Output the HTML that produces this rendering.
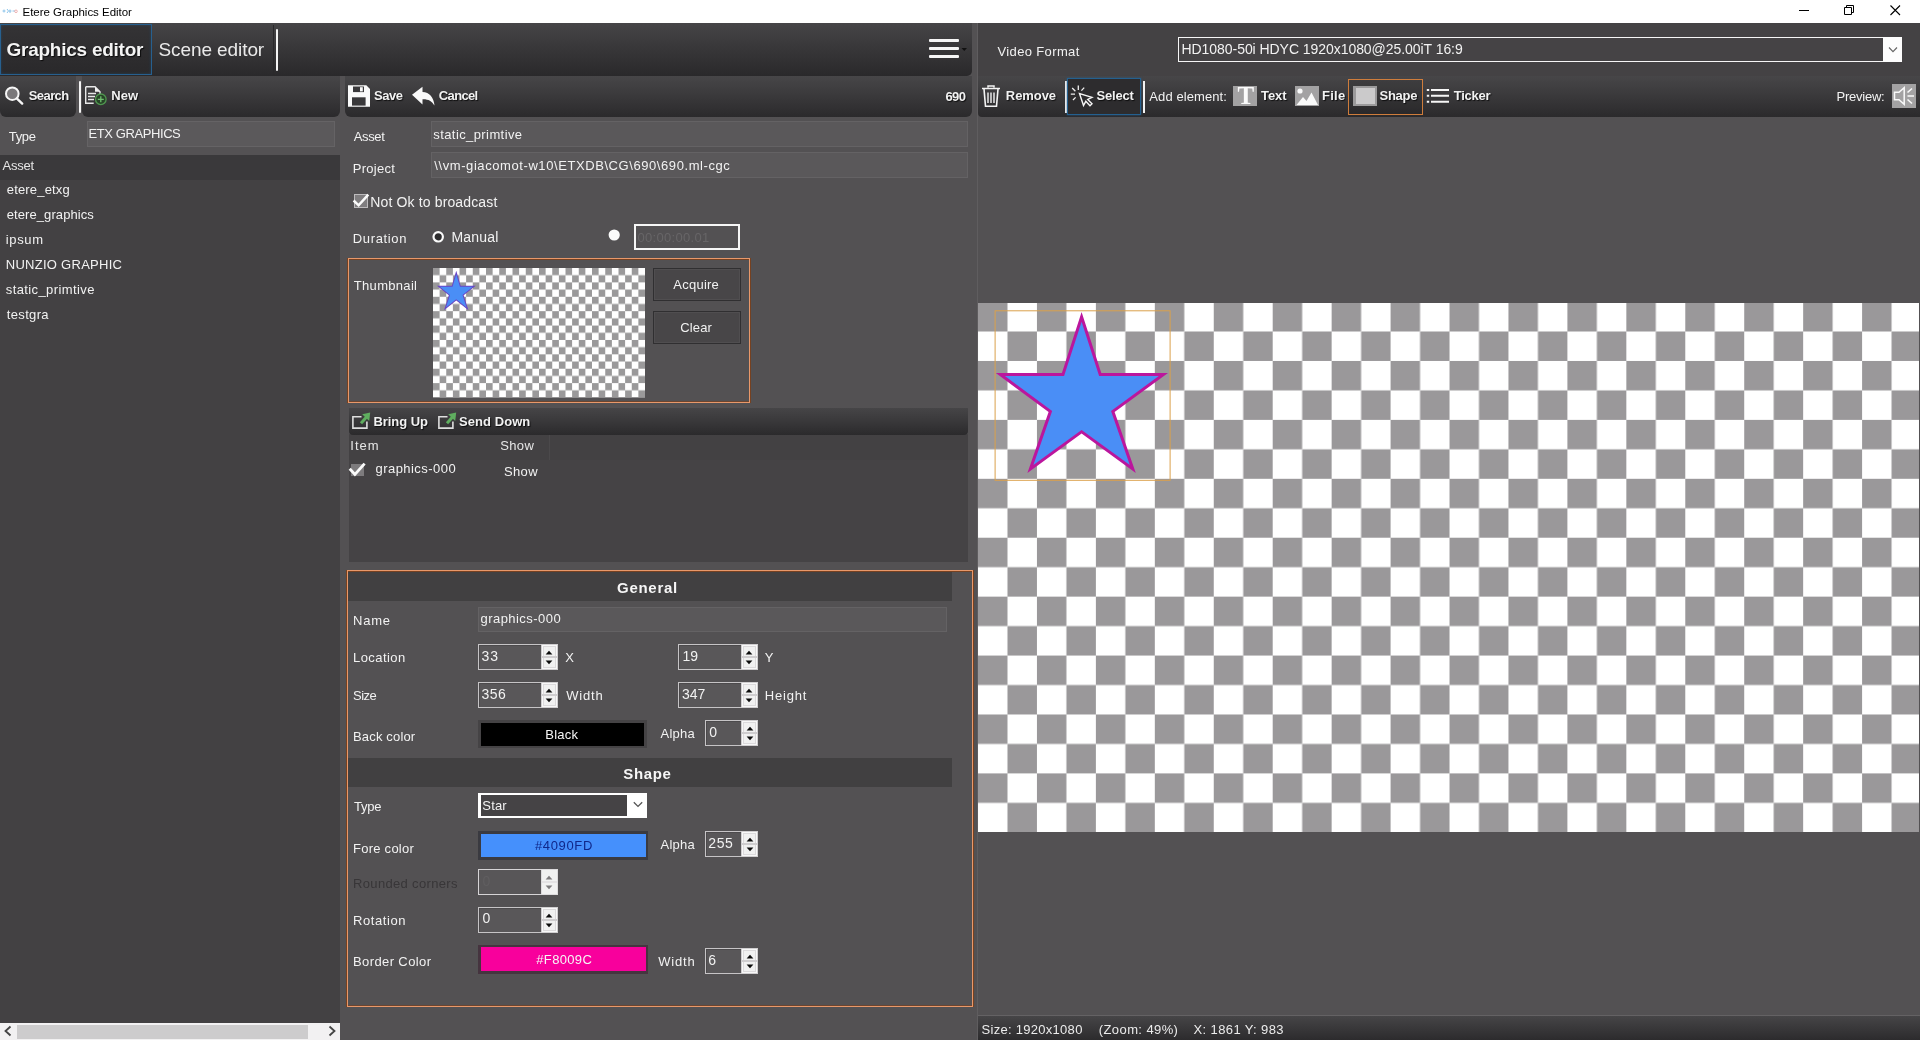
<!DOCTYPE html>
<html lang="en"><head><meta charset="utf-8"><title>Etere Graphics Editor</title>
<style>
html,body{margin:0;padding:0;}
body{width:1920px;height:1040px;overflow:hidden;position:relative;background:#535153;font-family:"Liberation Sans", sans-serif;}
#app{position:absolute;left:0;top:0;width:1920px;height:1040px;overflow:hidden;will-change:transform;}
#app div,#app svg,#app span.t{position:absolute;box-sizing:border-box;}
span.t{white-space:pre;line-height:normal;font-family:"Liberation Sans", sans-serif;}
</style></head><body><div id="app">
<div style="left:0px;top:0px;width:1920px;height:23px;background:#fff;"></div>
<svg style="left:2px;top:7px" width="16" height="8" viewBox="0 0 16 8"><path d="M0.5 4h3M2 2.5v3M5 2l1.5 2L5 6M8 2.5v3.5M7 4h2.5M10.5 4h2.5" stroke="#8cc4ea" stroke-width="1" fill="none"/><circle cx="14" cy="4.3" r="1.3" fill="none" stroke="#eaa0a0" stroke-width="0.8"/></svg>
<svg style="left:1790px;top:0px" width="130" height="23" viewBox="0 0 130 23"><path d="M9 10.5h10" stroke="#000" stroke-width="1"/><path d="M54.5 7.5h7v7h-7z M56.5 7.5v-2h7v7h-2" stroke="#000" stroke-width="1" fill="none"/><path d="M100.5 5.5l9.5 9.5M110 5.5l-9.5 9.5" stroke="#000" stroke-width="1.1" fill="none"/></svg>
<div style="left:0px;top:117px;width:340px;height:923px;background:#434143;"></div>
<div style="left:0px;top:23px;width:972px;height:53px;background:linear-gradient(#464547 0%,#3a393b 40%,#2a292b 100%);border-radius:0 0 5px 0;"></div>
<div style="left:0px;top:24px;width:152px;height:51px;background:linear-gradient(#343335,#2a292b);border:1px solid #27608f;box-shadow:inset 0 0 3px rgba(40,110,170,.35);"></div>
<div style="left:273px;top:25px;width:1px;height:50px;background:#2a292b;"></div>
<div style="left:276px;top:29px;width:2px;height:42px;background:#f4f4f4;border-radius:1px;"></div>
<div style="left:929px;top:39px;width:30px;height:3px;background:#f6f6f6;border-radius:1px;"></div>
<div style="left:929px;top:47px;width:30px;height:3px;background:#f6f6f6;border-radius:1px;"></div>
<div style="left:929px;top:55px;width:30px;height:3px;background:#f6f6f6;border-radius:1px;"></div>
<svg style="left:961px;top:47px" width="7" height="5" viewBox="0 0 7 5"><path d="M0.5 1h5.5l-2.75 3z" fill="#111"/></svg>
<div style="left:0px;top:76px;width:76px;height:41px;background:linear-gradient(#474648 0%,#3b3a3c 45%,#2b2a2c 100%);border-radius:0 0 6px 6px;"></div>
<div style="left:79px;top:81px;width:2px;height:32px;background:#f4f4f4;border-radius:1px;"></div>
<div style="left:82px;top:76px;width:258px;height:41px;background:linear-gradient(#474648 0%,#3b3a3c 45%,#2b2a2c 100%);border-radius:0 0 6px 6px;"></div>
<div style="left:345px;top:76px;width:627px;height:41px;background:linear-gradient(#474648 0%,#3b3a3c 45%,#2b2a2c 100%);border-radius:0 0 6px 6px;"></div>
<svg style="left:3px;top:84px" width="22" height="23" viewBox="0 0 22 23"><circle cx="9.3" cy="9.7" r="6.3" fill="#7a787a" stroke="#f6f6f6" stroke-width="2"/><path d="M14 14.6l5.2 5" stroke="#f6f6f6" stroke-width="2.4" stroke-linecap="round"/></svg>
<svg style="left:84px;top:85px" width="24" height="22" viewBox="0 0 24 22"><path d="M1.7 1.7h9.3l5 5v3M1.7 1.7v16.6h8" fill="none" stroke="#e8e8e8" stroke-width="1.4"/><path d="M11 1.7l5 5h-5z" fill="#f2f2f2"/><path d="M4 8.5h8M4 11.5h7M4 14.5h6" stroke="#e8e8e8" stroke-width="1.3"/><circle cx="16.8" cy="14.3" r="5.3" fill="#274427" stroke="#4f974f" stroke-width="1.3"/><path d="M13.8 14.3h6M16.8 11.3v6" stroke="#6fbf6f" stroke-width="1.3"/></svg>
<svg style="left:348px;top:85px" width="22" height="22" viewBox="0 0 22 22"><path d="M0 0.3h18.3l3.7 3.7v17.7h-22z" fill="#fafafa"/><rect x="5" y="1.5" width="11" height="5.6" fill="#3a393b"/><rect x="12" y="2.2" width="2.8" height="4.2" fill="#fafafa"/><rect x="4" y="12.3" width="13.6" height="8.3" fill="#39383a"/></svg>
<svg style="left:411px;top:86px" width="25" height="21" viewBox="0 0 25 21"><path d="M1 8.8L11.5 0.8v5.2c7 0.4 11.2 5.2 12 13.6c-2.6-4.6-6.2-6.6-12-6.4v5.2z" fill="#fafafa"/></svg>
<div style="left:0px;top:117px;width:340px;height:38px;background:#545254;"></div>
<div style="left:87px;top:121px;width:248px;height:26px;background:#5b595b;border:1px solid #656365;"></div>
<div style="left:0px;top:155px;width:340px;height:25px;background:#3a393b;"></div>
<div style="left:0px;top:1023px;width:340px;height:17px;background:#f2f1f2;"></div>
<div style="left:17px;top:1024.5px;width:291px;height:14px;background:#cdcccd;"></div>
<svg style="left:3px;top:1025px" width="10" height="12" viewBox="0 0 10 12"><path d="M7.5 1.5L2.5 6l5 4.5" stroke="#444" stroke-width="1.8" fill="none"/></svg>
<svg style="left:327px;top:1025px" width="10" height="12" viewBox="0 0 10 12"><path d="M2.5 1.5L7.5 6l-5 4.5" stroke="#444" stroke-width="1.8" fill="none"/></svg>
<div style="left:431px;top:121px;width:537px;height:26px;background:#5a585a;border:1px solid #646264;"></div>
<div style="left:431px;top:152px;width:537px;height:26px;background:#5a585a;border:1px solid #646264;"></div>
<div style="left:354px;top:194.3px;width:14px;height:13.5px;background:#7f7d7f;border:1px solid #bdbbbd;"></div>
<svg style="left:350px;top:190px" width="22" height="20" viewBox="0 0 22 20"><path d="M3.6 10.5l5 4.8L18.3 4.6" fill="none" stroke="#fbfbfb" stroke-width="2.5"/></svg>
<svg style="left:431px;top:230px" width="14" height="14" viewBox="0 0 14 14"><circle cx="7.2" cy="6.8" r="4.7" fill="#2c2b2d" stroke="#fafafa" stroke-width="2.2"/></svg>
<svg style="left:607px;top:228px" width="14" height="14" viewBox="0 0 14 14"><circle cx="7.2" cy="7" r="5.6" fill="#fbfbfb"/></svg>
<div style="left:634px;top:224px;width:105.5px;height:25.5px;background:#535153;border:2px solid #f6f6f6;"></div>
<div style="left:348px;top:258px;width:402px;height:145px;border:1px solid #e8986a;box-shadow:inset 0 1px 0 rgba(125,62,25,.85),-1px 0 0 rgba(125,62,25,.85),1px 0 0 rgba(125,62,25,.85),inset 0 -1px 0 rgba(125,62,25,.6);"></div>
<svg style="left:432.5px;top:268px" width="212" height="129.5" viewBox="0 0 212 129.5"><defs><pattern id="ck1" width="13.25" height="14.39" patternUnits="userSpaceOnUse" patternTransform="translate(0 0)"><rect width="13.25" height="14.39" fill="#fff"/><rect width="6.625" height="7.195" fill="#9a999a"/><rect x="6.625" y="7.195" width="6.625" height="7.195" fill="#9a999a"/></pattern></defs><rect width="212" height="129.5" fill="url(#ck1)"/></svg>
<div style="left:653px;top:267.5px;width:88px;height:33px;background:#484648;border:1px solid #302f31;box-shadow:inset 0 0 0 1px #504e50;"></div>
<div style="left:653px;top:310.5px;width:88px;height:33px;background:#484648;border:1px solid #302f31;box-shadow:inset 0 0 0 1px #504e50;"></div>
<div style="left:349px;top:434px;width:619px;height:128px;background:#454345;"></div>
<div style="left:349px;top:408px;width:619px;height:27px;background:linear-gradient(#464547 0%,#39383a 50%,#2b2a2c 100%);border-radius:0 0 4px 4px;"></div>
<svg style="left:352px;top:412px" width="19" height="17" viewBox="0 0 19 17"><path d="M9.5 4.8H0.9v11.3h14V9.5" fill="none" stroke="#dedede" stroke-width="1.6"/><path d="M9 11.2L14.5 5" stroke="#5fae5f" stroke-width="3"/><path d="M10.2 2.2L18.2 0.4L17.2 9z" fill="#5fae5f"/></svg>
<svg style="left:438px;top:412px" width="19" height="17" viewBox="0 0 19 17"><path d="M9.5 4.8H0.9v11.3h14V9.5" fill="none" stroke="#dedede" stroke-width="1.6"/><path d="M9 11.2L14.5 5" stroke="#5fae5f" stroke-width="3"/><path d="M10.2 2.2L18.2 0.4L17.2 9z" fill="#5fae5f"/></svg>
<div style="left:349px;top:435px;width:619px;height:25px;background:#434143;"></div>
<div style="left:549px;top:435px;width:1px;height:25px;background:#4b494b;"></div>
<div style="left:351px;top:464.2px;width:12.5px;height:11.4px;background:#7d7b7d;"></div>
<svg style="left:346px;top:460px" width="22" height="18" viewBox="0 0 22 18"><path d="M3.7 8.8l5.2 5.7L18.6 3.6" fill="none" stroke="#fbfbfb" stroke-width="2.8"/></svg>
<div style="left:347px;top:570px;width:626px;height:437px;border:1px solid #e8986a;box-shadow:inset 0 1px 0 rgba(125,62,25,.85),-1px 0 0 rgba(125,62,25,.85),1px 0 0 rgba(125,62,25,.85),inset 0 -1px 0 rgba(125,62,25,.6);"></div>
<div style="left:348px;top:572px;width:604px;height:29px;background:#414041;"></div>
<div style="left:477.5px;top:607px;width:469px;height:25px;background:#5a585a;border:1px solid #646264;"></div>
<div style="left:478px;top:644px;width:79.5px;height:26px;background:#595759;border:1px solid #c6c4c6;box-shadow:inset 1px 1px 0 #4c4a4c;"></div>
<div style="left:540.5px;top:644px;width:17px;height:26px;background:#f1f1f1;border:1px solid #d0ced0;box-shadow:inset 0 0 0 1px #f8f8f8,inset 0 0 0 2px #dcdadc;"></div>
<div style="left:541.5px;top:656.0px;width:15px;height:2px;background:#cfcdcf;"></div>
<svg style="left:545.0px;top:649.5px" width="8" height="5" viewBox="0 0 8 5"><path d="M0.6 4.6L4 0.8l3.4 3.8z" fill="#0c0c0c"/></svg>
<svg style="left:545.0px;top:659.5px" width="8" height="5" viewBox="0 0 8 5"><path d="M0.6 0.4L4 4.2l3.4-3.8z" fill="#0c0c0c"/></svg>
<div style="left:678px;top:644px;width:79.5px;height:26px;background:#595759;border:1px solid #c6c4c6;box-shadow:inset 1px 1px 0 #4c4a4c;"></div>
<div style="left:740.5px;top:644px;width:17px;height:26px;background:#f1f1f1;border:1px solid #d0ced0;box-shadow:inset 0 0 0 1px #f8f8f8,inset 0 0 0 2px #dcdadc;"></div>
<div style="left:741.5px;top:656.0px;width:15px;height:2px;background:#cfcdcf;"></div>
<svg style="left:745.0px;top:649.5px" width="8" height="5" viewBox="0 0 8 5"><path d="M0.6 4.6L4 0.8l3.4 3.8z" fill="#0c0c0c"/></svg>
<svg style="left:745.0px;top:659.5px" width="8" height="5" viewBox="0 0 8 5"><path d="M0.6 0.4L4 4.2l3.4-3.8z" fill="#0c0c0c"/></svg>
<div style="left:478px;top:682px;width:79.5px;height:26px;background:#595759;border:1px solid #c6c4c6;box-shadow:inset 1px 1px 0 #4c4a4c;"></div>
<div style="left:540.5px;top:682px;width:17px;height:26px;background:#f1f1f1;border:1px solid #d0ced0;box-shadow:inset 0 0 0 1px #f8f8f8,inset 0 0 0 2px #dcdadc;"></div>
<div style="left:541.5px;top:694.0px;width:15px;height:2px;background:#cfcdcf;"></div>
<svg style="left:545.0px;top:687.5px" width="8" height="5" viewBox="0 0 8 5"><path d="M0.6 4.6L4 0.8l3.4 3.8z" fill="#0c0c0c"/></svg>
<svg style="left:545.0px;top:697.5px" width="8" height="5" viewBox="0 0 8 5"><path d="M0.6 0.4L4 4.2l3.4-3.8z" fill="#0c0c0c"/></svg>
<div style="left:678px;top:682px;width:79.5px;height:26px;background:#595759;border:1px solid #c6c4c6;box-shadow:inset 1px 1px 0 #4c4a4c;"></div>
<div style="left:740.5px;top:682px;width:17px;height:26px;background:#f1f1f1;border:1px solid #d0ced0;box-shadow:inset 0 0 0 1px #f8f8f8,inset 0 0 0 2px #dcdadc;"></div>
<div style="left:741.5px;top:694.0px;width:15px;height:2px;background:#cfcdcf;"></div>
<svg style="left:745.0px;top:687.5px" width="8" height="5" viewBox="0 0 8 5"><path d="M0.6 4.6L4 0.8l3.4 3.8z" fill="#0c0c0c"/></svg>
<svg style="left:745.0px;top:697.5px" width="8" height="5" viewBox="0 0 8 5"><path d="M0.6 0.4L4 4.2l3.4-3.8z" fill="#0c0c0c"/></svg>
<div style="left:478.3px;top:720.2px;width:168.3px;height:28.3px;background:#454345;"></div>
<div style="left:480.6px;top:722.6px;width:163.70000000000002px;height:23.5px;background:#000;"></div>
<div style="left:705px;top:720px;width:53px;height:26px;background:#595759;border:1px solid #c6c4c6;box-shadow:inset 1px 1px 0 #4c4a4c;"></div>
<div style="left:741px;top:720px;width:17px;height:26px;background:#f1f1f1;border:1px solid #d0ced0;box-shadow:inset 0 0 0 1px #f8f8f8,inset 0 0 0 2px #dcdadc;"></div>
<div style="left:742px;top:732.0px;width:15px;height:2px;background:#cfcdcf;"></div>
<svg style="left:745.5px;top:725.5px" width="8" height="5" viewBox="0 0 8 5"><path d="M0.6 4.6L4 0.8l3.4 3.8z" fill="#0c0c0c"/></svg>
<svg style="left:745.5px;top:735.5px" width="8" height="5" viewBox="0 0 8 5"><path d="M0.6 0.4L4 4.2l3.4-3.8z" fill="#0c0c0c"/></svg>
<div style="left:348px;top:758px;width:604px;height:28.5px;background:#414041;"></div>
<div style="left:478.3px;top:792.5px;width:168.5px;height:25.8px;background:#fff;"></div>
<div style="left:480.8px;top:795px;width:146.2px;height:20.8px;background:#454345;"></div>
<svg style="left:632px;top:800px" width="12" height="9" viewBox="0 0 12 9"><path d="M1.8 2.2L6 6.4l4.2-4.2" fill="none" stroke="#555" stroke-width="1.3"/></svg>
<div style="left:478.3px;top:831.2px;width:170.2px;height:28.5px;background:#3a3a40;"></div>
<div style="left:480.6px;top:833.6px;width:165.6px;height:23.7px;background:#4590fc;"></div>
<div style="left:705px;top:831px;width:53px;height:26px;background:#595759;border:1px solid #c6c4c6;box-shadow:inset 1px 1px 0 #4c4a4c;"></div>
<div style="left:741px;top:831px;width:17px;height:26px;background:#f1f1f1;border:1px solid #d0ced0;box-shadow:inset 0 0 0 1px #f8f8f8,inset 0 0 0 2px #dcdadc;"></div>
<div style="left:742px;top:843.0px;width:15px;height:2px;background:#cfcdcf;"></div>
<svg style="left:745.5px;top:836.5px" width="8" height="5" viewBox="0 0 8 5"><path d="M0.6 4.6L4 0.8l3.4 3.8z" fill="#0c0c0c"/></svg>
<svg style="left:745.5px;top:846.5px" width="8" height="5" viewBox="0 0 8 5"><path d="M0.6 0.4L4 4.2l3.4-3.8z" fill="#0c0c0c"/></svg>
<div style="left:478px;top:869px;width:79.5px;height:26px;background:#585658;border:1px solid #d6d4d6;"></div>
<div style="left:540.5px;top:869px;width:17px;height:26px;background:#f1f1f1;border:1px solid #dddbdd;"></div>
<div style="left:541.5px;top:881.0px;width:15px;height:2px;background:#e4e2e4;"></div>
<svg style="left:545.0px;top:874.5px" width="8" height="5" viewBox="0 0 8 5"><path d="M0.6 4.6L4 0.8l3.4 3.8z" fill="#7e7c7e"/></svg>
<svg style="left:545.0px;top:884.5px" width="8" height="5" viewBox="0 0 8 5"><path d="M0.6 0.4L4 4.2l3.4-3.8z" fill="#7e7c7e"/></svg>
<div style="left:478px;top:907px;width:79.5px;height:26px;background:#595759;border:1px solid #c6c4c6;box-shadow:inset 1px 1px 0 #4c4a4c;"></div>
<div style="left:540.5px;top:907px;width:17px;height:26px;background:#f1f1f1;border:1px solid #d0ced0;box-shadow:inset 0 0 0 1px #f8f8f8,inset 0 0 0 2px #dcdadc;"></div>
<div style="left:541.5px;top:919.0px;width:15px;height:2px;background:#cfcdcf;"></div>
<svg style="left:545.0px;top:912.5px" width="8" height="5" viewBox="0 0 8 5"><path d="M0.6 4.6L4 0.8l3.4 3.8z" fill="#0c0c0c"/></svg>
<svg style="left:545.0px;top:922.5px" width="8" height="5" viewBox="0 0 8 5"><path d="M0.6 0.4L4 4.2l3.4-3.8z" fill="#0c0c0c"/></svg>
<div style="left:478.3px;top:945px;width:170.2px;height:28.5px;background:#45343f;"></div>
<div style="left:480.6px;top:947.4px;width:165.6px;height:23.7px;background:#f8009c;"></div>
<div style="left:705px;top:948px;width:53px;height:26px;background:#595759;border:1px solid #c6c4c6;box-shadow:inset 1px 1px 0 #4c4a4c;"></div>
<div style="left:741px;top:948px;width:17px;height:26px;background:#f1f1f1;border:1px solid #d0ced0;box-shadow:inset 0 0 0 1px #f8f8f8,inset 0 0 0 2px #dcdadc;"></div>
<div style="left:742px;top:960.0px;width:15px;height:2px;background:#cfcdcf;"></div>
<svg style="left:745.5px;top:953.5px" width="8" height="5" viewBox="0 0 8 5"><path d="M0.6 4.6L4 0.8l3.4 3.8z" fill="#0c0c0c"/></svg>
<svg style="left:745.5px;top:963.5px" width="8" height="5" viewBox="0 0 8 5"><path d="M0.6 0.4L4 4.2l3.4-3.8z" fill="#0c0c0c"/></svg>
<div style="left:977px;top:23px;width:943px;height:53px;background:#444244;"></div>
<div style="left:977px;top:23px;width:1px;height:1017px;background:#5f5d5f;"></div>
<div style="left:1177.5px;top:37px;width:724px;height:25px;background:#454345;border:1.3px solid #f6f6f6;"></div>
<div style="left:1883px;top:37px;width:18.5px;height:25px;background:#fdfdfd;"></div>
<svg style="left:1887px;top:45px" width="12" height="9" viewBox="0 0 12 9"><path d="M2 2.5L6 6.6l4-4.1" fill="none" stroke="#666" stroke-width="1.2"/></svg>
<div style="left:977.5px;top:76px;width:942.5px;height:41px;background:linear-gradient(#474648 0%,#3b3a3c 45%,#2b2a2c 100%);border-radius:0 0 0 4px;"></div>
<svg style="left:981px;top:85px" width="20" height="23" viewBox="0 0 20 23"><path d="M7 2.4V1h6v1.4M1 3.6h18" fill="none" stroke="#f4f4f4" stroke-width="1.5"/><path d="M3 4l1.5 17.2h11L17 4" fill="none" stroke="#f4f4f4" stroke-width="1.6"/><path d="M7 7.5v10.5M10 7.5v10.5M13 7.5v10.5" stroke="#f4f4f4" stroke-width="1.4"/></svg>
<div style="left:1065px;top:81px;width:1.6px;height:32px;background:#f2f2f2;"></div>
<div style="left:1067px;top:78px;width:73.5px;height:37px;background:#2d2c2e;border:1px solid #24608f;box-shadow:0 0 2px rgba(36,96,143,.8);"></div>
<svg style="left:1070px;top:84px" width="24" height="24" viewBox="0 0 24 24"><path d="M9.5 9.5l4 12 2.3-4.2 4.2 4.4 2-1.9-4.3-4.3 4.3-2.2z" fill="#2c2b2d" stroke="#f6f6f6" stroke-width="1.4" stroke-linejoin="miter"/><path d="M8.3 1.5v4.5M2.2 4l3.2 3.2M0.8 10.2h4.2M14.2 3.6l-2.8 3M3 16l2.6-2.6" stroke="#f0f0f0" stroke-width="1.3" fill="none"/></svg>
<div style="left:1143px;top:81px;width:1.6px;height:32px;background:#f2f2f2;"></div>
<div style="left:1233px;top:85.5px;width:24px;height:20.5px;background:#a3a2a3;"></div>
<svg style="left:1295px;top:85.5px" width="24" height="20.5" viewBox="0 0 24 20.5"><rect width="24" height="20.5" fill="#a3a2a3"/><circle cx="5" cy="5" r="2.6" fill="#fafafa"/><path d="M1.5 19l6.5-8 3.5 4 5-8.5 6.5 12.5z" fill="#fafafa"/></svg>
<div style="left:1348px;top:79px;width:75px;height:36px;border:1px solid #cf7d3c;background:rgba(0,0,0,.08);"></div>
<div style="left:1353px;top:85.5px;width:24px;height:20.5px;background:#9b9a9b;"></div>
<div style="left:1355.5px;top:88px;width:19px;height:15.5px;background:#cbcacb;"></div>
<svg style="left:1426px;top:87px" width="24" height="18" viewBox="0 0 24 18"><path d="M5 3h18M5 8.8h18M5 14.7h18" stroke="#f6f6f6" stroke-width="2"/><path d="M0.8 3h2.4M0.8 8.8h2.4M0.8 14.7h2.4" stroke="#f6f6f6" stroke-width="2"/></svg>
<svg style="left:1892px;top:84px" width="24" height="24" viewBox="0 0 24 24"><rect width="24" height="24" fill="#a3a2a3"/><path d="M2.5 8.2h4.5l5.2-4.6v16.8L7 15.8H2.5z" fill="none" stroke="#fafafa" stroke-width="1.5"/><path d="M15.5 8.5l4.5-4M15.5 12h6.5M15.5 15.5l4.5 4" stroke="#fafafa" stroke-width="1.6"/></svg>
<svg style="left:978px;top:302.5px" width="941" height="529.4" viewBox="0 0 941 529.4"><defs><pattern id="ck2" width="58.94" height="58.92" patternUnits="userSpaceOnUse" patternTransform="translate(0 -0.95)"><rect width="58.94" height="58.92" fill="#fff"/><rect width="29.47" height="29.46" fill="#9a989a"/><rect x="29.47" y="29.46" width="29.47" height="29.46" fill="#9a989a"/></pattern></defs><rect width="941" height="529.4" fill="url(#ck2)"/></svg>
<svg style="left:978px;top:302px" width="942" height="530" viewBox="0 0 942 530"><polygon points="103.60,10.00 123.30,71.00 190.00,71.00 136.60,110.00 157.80,171.00 103.60,131.60 49.40,171.00 70.60,110.00 17.80,71.00 83.90,71.00" fill="#bb169d"/><polygon points="103.60,19.76 121.12,74.00 180.81,74.00 133.04,108.89 151.83,162.95 103.60,127.89 55.37,162.95 74.16,108.90 26.91,74.00 86.08,74.00" fill="#4a8ef6"/><rect x="17.1" y="8.8" width="175" height="169.5" fill="none" stroke="#dba04c" stroke-width="1"/></svg>
<svg style="left:432px;top:268px" width="213" height="130" viewBox="0 0 213 130"><polygon points="24.25,2.85 28.68,17.78 43.71,17.78 31.68,27.32 36.46,42.25 24.25,32.61 12.03,42.25 16.81,27.32 4.91,17.78 19.81,17.78" fill="#6a45c4"/><polygon points="24.25,6.36 27.94,18.78 40.84,18.78 30.52,26.97 34.51,39.44 24.25,31.33 13.98,39.44 17.97,26.97 7.76,18.78 20.55,18.78" fill="#4a8ef6"/></svg>
<div style="left:978px;top:1015px;width:942px;height:1px;background:#646264;"></div>
<div style="left:978px;top:1016px;width:942px;height:24px;background:linear-gradient(#464547,#2c2b2d);"></div>
<span class="t" style="left:22.50px;top:5.80px;font-size:11.5px;font-weight:400;color:#000;letter-spacing:-0.025px;">Etere Graphics Editor</span>
<span class="t" style="left:6.50px;top:39.00px;font-size:19px;font-weight:700;color:#f4f4f4;letter-spacing:-0.250px;text-shadow:1px 1px 1px rgba(0,0,0,.75);">Graphics editor</span>
<span class="t" style="left:158.50px;top:39.00px;font-size:19px;font-weight:400;color:#eaeaea;letter-spacing:-0.091px;">Scene editor</span>
<span class="t" style="left:28.80px;top:88.40px;font-size:13px;font-weight:700;color:#f2f2f2;letter-spacing:-0.600px;text-shadow:1px 1px 1px rgba(0,0,0,.75);">Search</span>
<span class="t" style="left:111.20px;top:88.40px;font-size:13px;font-weight:700;color:#f2f2f2;letter-spacing:0.150px;text-shadow:1px 1px 1px rgba(0,0,0,.75);">New</span>
<span class="t" style="left:374.10px;top:88.40px;font-size:13px;font-weight:700;color:#f2f2f2;letter-spacing:-0.533px;text-shadow:1px 1px 1px rgba(0,0,0,.75);">Save</span>
<span class="t" style="left:438.80px;top:88.40px;font-size:13px;font-weight:700;color:#f2f2f2;letter-spacing:-0.640px;text-shadow:1px 1px 1px rgba(0,0,0,.75);">Cancel</span>
<span class="t" style="left:945.40px;top:88.70px;font-size:13px;font-weight:700;color:#f2f2f2;letter-spacing:-0.500px;text-shadow:1px 1px 1px rgba(0,0,0,.75);">690</span>
<span class="t" style="left:8.80px;top:128.60px;font-size:13px;font-weight:400;color:#f2f2f2;letter-spacing:-0.333px;">Type</span>
<span class="t" style="left:88.40px;top:125.80px;font-size:13px;font-weight:400;color:#f2f2f2;letter-spacing:-0.400px;">ETX GRAPHICS</span>
<span class="t" style="left:2.50px;top:157.50px;font-size:13px;font-weight:400;color:#e4e4e4;letter-spacing:-0.250px;">Asset</span>
<span class="t" style="left:6.80px;top:181.50px;font-size:13px;font-weight:400;color:#f2f2f2;letter-spacing:0.167px;">etere_etxg</span>
<span class="t" style="left:6.80px;top:206.50px;font-size:13px;font-weight:400;color:#f2f2f2;letter-spacing:0.077px;">etere_graphics</span>
<span class="t" style="left:5.80px;top:231.50px;font-size:13px;font-weight:400;color:#f2f2f2;letter-spacing:0.625px;">ipsum</span>
<span class="t" style="left:5.80px;top:256.50px;font-size:13px;font-weight:400;color:#f2f2f2;letter-spacing:0.269px;">NUNZIO GRAPHIC</span>
<span class="t" style="left:5.80px;top:281.50px;font-size:13px;font-weight:400;color:#f2f2f2;letter-spacing:0.393px;">static_primtive</span>
<span class="t" style="left:6.80px;top:306.50px;font-size:13px;font-weight:400;color:#f2f2f2;letter-spacing:0.333px;">testgra</span>
<span class="t" style="left:353.80px;top:129.30px;font-size:13px;font-weight:400;color:#f2f2f2;letter-spacing:-0.375px;">Asset</span>
<span class="t" style="left:433.30px;top:126.80px;font-size:13px;font-weight:400;color:#f2f2f2;letter-spacing:0.407px;">static_primtive</span>
<span class="t" style="left:352.80px;top:160.50px;font-size:13px;font-weight:400;color:#f2f2f2;letter-spacing:0.250px;">Project</span>
<span class="t" style="left:434.30px;top:157.50px;font-size:13px;font-weight:400;color:#f2f2f2;letter-spacing:0.580px;">\\vm-giacomot-w10\ETXDB\CG\690\690.ml-cgc</span>
<span class="t" style="left:370.30px;top:194.00px;font-size:14px;font-weight:400;color:#f2f2f2;letter-spacing:0.139px;">Not Ok to broadcast</span>
<span class="t" style="left:352.80px;top:231.00px;font-size:13px;font-weight:400;color:#f2f2f2;letter-spacing:0.643px;">Duration</span>
<span class="t" style="left:451.50px;top:229.00px;font-size:14px;font-weight:400;color:#f2f2f2;letter-spacing:0.200px;">Manual</span>
<span class="t" style="left:637.50px;top:230.00px;font-size:13px;font-weight:400;color:#676567;letter-spacing:0.300px;">00:00:00.01</span>
<span class="t" style="left:353.80px;top:278.00px;font-size:13px;font-weight:400;color:#f2f2f2;letter-spacing:0.312px;">Thumbnail</span>
<span class="t" style="left:673.25px;top:277.30px;font-size:13px;font-weight:400;color:#f2f2f2;letter-spacing:0.250px;">Acquire</span>
<span class="t" style="left:680.25px;top:320.00px;font-size:13px;font-weight:400;color:#f2f2f2;letter-spacing:0.125px;">Clear</span>
<span class="t" style="left:373.50px;top:414.30px;font-size:13px;font-weight:700;color:#f2f2f2;letter-spacing:-0.071px;text-shadow:1px 1px 1px rgba(0,0,0,.75);">Bring Up</span>
<span class="t" style="left:459.00px;top:414.30px;font-size:13px;font-weight:700;color:#f2f2f2;letter-spacing:0.062px;text-shadow:1px 1px 1px rgba(0,0,0,.75);">Send Down</span>
<span class="t" style="left:350.30px;top:438.00px;font-size:13px;font-weight:400;color:#e6e6e6;letter-spacing:1.000px;">Item</span>
<span class="t" style="left:500.30px;top:438.00px;font-size:13px;font-weight:400;color:#e6e6e6;letter-spacing:0.333px;">Show</span>
<span class="t" style="left:375.50px;top:461.30px;font-size:13px;font-weight:400;color:#f2f2f2;letter-spacing:0.455px;">graphics-000</span>
<span class="t" style="left:504.00px;top:463.80px;font-size:13px;font-weight:400;color:#f2f2f2;letter-spacing:0.333px;">Show</span>
<span class="t" style="left:617.05px;top:579.00px;font-size:15px;font-weight:700;color:#f6f6f6;letter-spacing:0.717px;">General</span>
<span class="t" style="left:353.00px;top:613.00px;font-size:13px;font-weight:400;color:#f2f2f2;letter-spacing:0.767px;">Name</span>
<span class="t" style="left:480.50px;top:611.30px;font-size:13px;font-weight:400;color:#f2f2f2;letter-spacing:0.455px;">graphics-000</span>
<span class="t" style="left:353.00px;top:649.80px;font-size:13px;font-weight:400;color:#f2f2f2;letter-spacing:0.429px;">Location</span>
<span class="t" style="left:481.50px;top:647.80px;font-size:14px;font-weight:400;color:#f2f2f2;letter-spacing:1.000px;">33</span>
<span class="t" style="left:565.30px;top:649.80px;font-size:13px;font-weight:400;color:#f2f2f2;letter-spacing:1.000px;">X</span>
<span class="t" style="left:682.50px;top:647.80px;font-size:14px;font-weight:400;color:#f2f2f2;letter-spacing:0.000px;">19</span>
<span class="t" style="left:764.80px;top:649.80px;font-size:13px;font-weight:400;color:#f2f2f2;letter-spacing:1.500px;">Y</span>
<span class="t" style="left:353.00px;top:688.00px;font-size:13px;font-weight:400;color:#f2f2f2;letter-spacing:-0.500px;">Size</span>
<span class="t" style="left:481.50px;top:685.80px;font-size:14px;font-weight:400;color:#f2f2f2;letter-spacing:0.500px;">356</span>
<span class="t" style="left:566.30px;top:688.00px;font-size:13px;font-weight:400;color:#f2f2f2;letter-spacing:0.800px;">Width</span>
<span class="t" style="left:682.00px;top:685.80px;font-size:14px;font-weight:400;color:#f2f2f2;letter-spacing:0.000px;">347</span>
<span class="t" style="left:764.80px;top:688.00px;font-size:13px;font-weight:400;color:#f2f2f2;letter-spacing:0.800px;">Height</span>
<span class="t" style="left:353.00px;top:728.50px;font-size:13px;font-weight:400;color:#f2f2f2;letter-spacing:0.167px;">Back color</span>
<span class="t" style="left:545.30px;top:727.30px;font-size:13px;font-weight:400;color:#f6f6f6;letter-spacing:0.200px;">Black</span>
<span class="t" style="left:660.50px;top:726.00px;font-size:13px;font-weight:400;color:#f2f2f2;letter-spacing:0.250px;">Alpha</span>
<span class="t" style="left:709.30px;top:723.80px;font-size:14px;font-weight:400;color:#f2f2f2;letter-spacing:0.500px;">0</span>
<span class="t" style="left:623.25px;top:764.80px;font-size:15px;font-weight:700;color:#f6f6f6;letter-spacing:0.625px;">Shape</span>
<span class="t" style="left:354.00px;top:798.80px;font-size:13px;font-weight:400;color:#f2f2f2;letter-spacing:-0.233px;">Type</span>
<span class="t" style="left:482.30px;top:798.00px;font-size:13px;font-weight:400;color:#f2f2f2;letter-spacing:0.167px;">Star</span>
<span class="t" style="left:353.00px;top:840.50px;font-size:13px;font-weight:400;color:#f2f2f2;letter-spacing:0.256px;">Fore color</span>
<span class="t" style="left:535.00px;top:838.00px;font-size:13px;font-weight:400;color:#10288a;letter-spacing:0.633px;">#4090FD</span>
<span class="t" style="left:660.50px;top:836.80px;font-size:13px;font-weight:400;color:#f2f2f2;letter-spacing:0.250px;">Alpha</span>
<span class="t" style="left:708.30px;top:834.60px;font-size:14px;font-weight:400;color:#f2f2f2;letter-spacing:0.600px;">255</span>
<span class="t" style="left:353.00px;top:875.50px;font-size:13px;font-weight:400;color:#383638;letter-spacing:0.343px;">Rounded corners</span>
<span class="t" style="left:482.50px;top:872.60px;font-size:14px;font-weight:400;color:#605e60;letter-spacing:0.000px;">0</span>
<span class="t" style="left:353.00px;top:913.00px;font-size:13px;font-weight:400;color:#f2f2f2;letter-spacing:0.571px;">Rotation</span>
<span class="t" style="left:482.50px;top:910.30px;font-size:14px;font-weight:400;color:#f2f2f2;letter-spacing:0.000px;">0</span>
<span class="t" style="left:353.00px;top:954.30px;font-size:13px;font-weight:400;color:#f2f2f2;letter-spacing:0.391px;">Border Color</span>
<span class="t" style="left:536.30px;top:951.80px;font-size:13px;font-weight:400;color:#f6f6f6;letter-spacing:0.333px;">#F8009C</span>
<span class="t" style="left:658.30px;top:954.30px;font-size:13px;font-weight:400;color:#f2f2f2;letter-spacing:0.800px;">Width</span>
<span class="t" style="left:708.30px;top:951.60px;font-size:14px;font-weight:400;color:#f2f2f2;letter-spacing:1.000px;">6</span>
<span class="t" style="left:997.50px;top:44.30px;font-size:13px;font-weight:400;color:#f2f2f2;letter-spacing:0.364px;">Video Format</span>
<span class="t" style="left:1181.50px;top:40.80px;font-size:14px;font-weight:400;color:#f2f2f2;letter-spacing:-0.054px;">HD1080-50i HDYC 1920x1080@25.00iT 16:9</span>
<span class="t" style="left:1005.80px;top:88.40px;font-size:13px;font-weight:700;color:#f2f2f2;letter-spacing:-0.060px;text-shadow:1px 1px 1px rgba(0,0,0,.75);">Remove</span>
<span class="t" style="left:1096.50px;top:88.40px;font-size:13px;font-weight:700;color:#f2f2f2;letter-spacing:-0.200px;text-shadow:1px 1px 1px rgba(0,0,0,.75);">Select</span>
<span class="t" style="left:1149.30px;top:88.70px;font-size:13px;font-weight:400;color:#f2f2f2;letter-spacing:0.091px;">Add element:</span>
<span class="t" style="left:1237.50px;top:81.60px;font-size:25px;font-weight:700;color:#fbfbfb;letter-spacing:0.000px;font-family:'Liberation Serif',serif;">T</span>
<span class="t" style="left:1261.00px;top:88.40px;font-size:13px;font-weight:700;color:#f2f2f2;letter-spacing:-0.067px;text-shadow:1px 1px 1px rgba(0,0,0,.75);">Text</span>
<span class="t" style="left:1322.00px;top:88.40px;font-size:13px;font-weight:700;color:#f2f2f2;letter-spacing:0.267px;text-shadow:1px 1px 1px rgba(0,0,0,.75);">File</span>
<span class="t" style="left:1379.50px;top:88.40px;font-size:13px;font-weight:700;color:#f2f2f2;letter-spacing:-0.250px;text-shadow:1px 1px 1px rgba(0,0,0,.75);">Shape</span>
<span class="t" style="left:1453.80px;top:88.40px;font-size:13px;font-weight:700;color:#f2f2f2;letter-spacing:-0.260px;text-shadow:1px 1px 1px rgba(0,0,0,.75);">Ticker</span>
<span class="t" style="left:1836.50px;top:88.60px;font-size:13px;font-weight:400;color:#f2f2f2;letter-spacing:-0.243px;">Preview:</span>
<span class="t" style="left:981.50px;top:1022.00px;font-size:13px;font-weight:400;color:#ececec;letter-spacing:0.286px;">Size: 1920x1080</span>
<span class="t" style="left:1098.80px;top:1022.00px;font-size:13px;font-weight:400;color:#ececec;letter-spacing:0.400px;">(Zoom: 49%)</span>
<span class="t" style="left:1193.50px;top:1022.00px;font-size:13px;font-weight:400;color:#ececec;letter-spacing:0.385px;">X: 1861 Y: 983</span>
</div></body></html>
